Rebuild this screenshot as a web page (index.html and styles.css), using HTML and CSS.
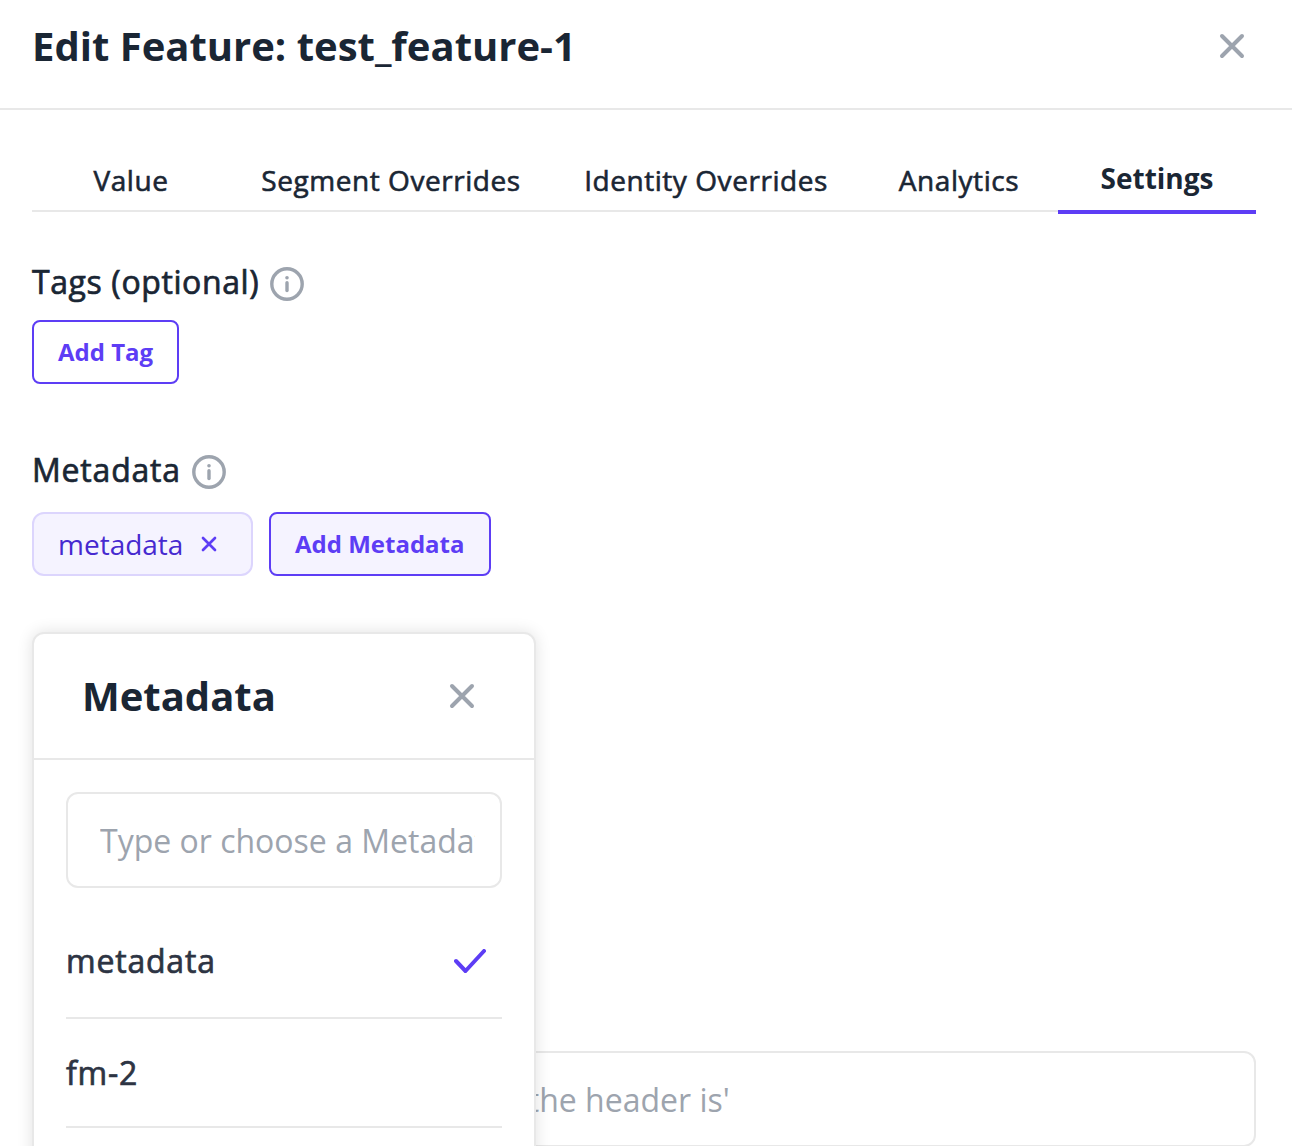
FILE: index.html
```html
<!DOCTYPE html>
<html lang="en">
<head>
<meta charset="utf-8">
<title>Edit Feature</title>
<link rel="stylesheet" href="styles.css">
</head>
<body>
<div class="modal">
  <header class="modal-header">
    <h1 class="modal-title">Edit Feature: test_feature-1</h1>
    <button class="icon-button" aria-label="Close">
      <svg class="close-icon" viewBox="0 0 28 28"><path d="M4 4l20 20M24 4l-20 20"/></svg>
    </button>
  </header>
  <main class="modal-body">
    <nav class="tabs">
      <a class="tab">Value</a>
      <a class="tab tab-segments">Segment Overrides</a>
      <a class="tab tab-identities">Identity Overrides</a>
      <a class="tab">Analytics</a>
      <a class="tab tab-active">Settings</a>
    </nav>
    <section class="field tags-field">
      <div class="label"><span>Tags (optional)</span>
        <svg class="info-icon" viewBox="0 0 34 34"><circle class="ring" cx="17" cy="17" r="15.2"/><circle class="dot" cx="17" cy="10.700" r="1.8"/><path class="stem" d="M17 15.7v7.9"/></svg>
      </div>
      <div class="row"><button class="button">Add Tag</button></div>
    </section>
    <section class="field metadata-field">
      <div class="label label-metadata"><span>Metadata</span>
        <svg class="info-icon" viewBox="0 0 34 34"><circle class="ring" cx="17" cy="17" r="15.2"/><circle class="dot" cx="17" cy="10.700" r="1.8"/><path class="stem" d="M17 15.7v7.9"/></svg>
      </div>
      <div class="row">
        <span class="chip">metadata
          <svg class="chip-close" viewBox="0 0 16 16"><path d="M2 2l12 12M14 2L2 14"/></svg>
        </span>
        <button class="button button-pressed">Add Metadata</button>
      </div>
      <div class="popover">
        <div class="popover-header">
          <h2 class="popover-title">Metadata</h2>
          <button class="icon-button" aria-label="Close">
            <svg class="close-icon" viewBox="0 0 28 28"><path d="M4 4l20 20M24 4l-20 20"/></svg>
          </button>
        </div>
        <div class="popover-body">
          <div class="search"><span class="search-text">Type or choose a Metadata</span></div>
          <div class="option option-selected"><span>metadata</span>
            <svg class="check" viewBox="0 0 32 24"><path d="M2 12l9.500 10L30 2"/></svg>
          </div>
          <div class="option"><span>fm-2</span></div>
        </div>
      </div>
    </section>
    <div class="description"><span>e.g. 'This determines what size the header is'</span></div>
  </main>
</div>
</body>
</html>
```
FILE: styles.css
```css
* { box-sizing: border-box; }
body {
  margin: 0;
  overflow: hidden;
  background: #fff;
  color: #1a2634;
  font-family: "Open Sans", "Noto Sans", sans-serif;
}
h1, h2 { margin: 0; font-size: 40px; line-height: 56px; font-weight: 700; }
button { font-family: inherit; }
.modal { height: 1146px; overflow: hidden; }
.modal-header {
  display: flex;
  align-items: flex-start;
  justify-content: space-between;
  height: 110px;
  padding: 18px 46px 0 32px;
  border-bottom: 2px solid #e8e8e8;
}
.icon-button {
  display: flex;
  align-items: center;
  height: 56px;
  padding: 0;
  border: 0;
  background: none;
}
.close-icon { width: 28px; height: 28px; fill: none; stroke: #9da4ae; stroke-width: 4; stroke-linecap: round; }
.modal-body { padding: 40px 36px 0 32px; }
.tabs { display: flex; height: 62px; border-bottom: 2px solid #e8e8e8; }
.tab {
  display: flex;
  align-items: center;
  justify-content: center;
  width: 198px;
  height: 62px;
  padding-bottom: 2px;
  font-size: 28px;
  line-height: 40px;
  font-weight: 500;
  letter-spacing: 0.55px;
  -webkit-text-stroke: 0.6px currentColor;
  white-space: nowrap;
}
.tab-segments { width: 322px; }
.tab-identities { width: 308px; }
.tab-active {
  height: 64px;
  padding-bottom: 4px;
  font-weight: 700;
  letter-spacing: 0;
  -webkit-text-stroke: 0;
  border-bottom: 4px solid #5d3df5;
}
.label {
  display: flex;
  align-items: center;
  gap: 11px;
  font-size: 32px;
  line-height: 40px;
  font-weight: 500;
  letter-spacing: 0.6px;
  -webkit-text-stroke: 0.7px currentColor;
}
.label-metadata { letter-spacing: 0.8px; }
.info-icon { width: 34px; height: 34px; margin-top: 4px; -webkit-text-stroke: 0; }
.ring { fill: none; stroke: #9da4ae; stroke-width: 3.4; }
.dot { fill: #9da4ae; }
.stem { stroke: #9da4ae; stroke-width: 3.4; stroke-linecap: round; }
.tags-field { margin-top: 50px; }
.row { display: flex; gap: 16px; }
.tags-field .row { margin-top: 18px; }
.metadata-field { position: relative; margin-top: 66px; }
.metadata-field .row { margin-top: 22px; }
.button {
  height: 64px;
  padding: 0 24px 2px;
  border: 2px solid #5d3df5;
  border-radius: 8px;
  background: #fff;
  color: #5d3df5;
  font-size: 24px;
  font-weight: 700;
}
.button-pressed { background: #f5f3ff; }
.chip {
  display: flex;
  align-items: center;
  gap: 18px;
  width: 221px;
  height: 64px;
  padding: 0 0 0 24px;
  border: 2px solid #dcd5fd;
  border-radius: 12px;
  background: #f5f3ff;
  color: #4629d0;
  font-size: 28px;
}
.chip-close { width: 16px; height: 16px; margin-top: -1px; fill: none; stroke: #5d3df5; stroke-width: 2.7; stroke-linecap: round; }
.popover {
  position: absolute;
  z-index: 1;
  top: 182px;
  left: 0;
  width: 504px;
  height: 620px;
  border: 2px solid #e8e8e8;
  border-radius: 12px;
  background: #fff;
  box-shadow: 0 0 16px rgba(0, 0, 0, 0.12);
}
.popover-header {
  display: flex;
  align-items: center;
  justify-content: space-between;
  height: 126px;
  padding: 0 58px 0 48px;
  border-bottom: 2px solid #e8e8e8;
}
.popover-body { padding: 32px; }
.search {
  height: 96px;
  margin-bottom: 17px;
  padding: 1px 25px 0 32px;
  border: 2px solid #e8e8e8;
  border-radius: 12px;
  color: #9da4ae;
  font-size: 32px;
  line-height: 92px;
}
.search-text { display: block; overflow: hidden; white-space: nowrap; }
.option {
  display: flex;
  align-items: center;
  justify-content: space-between;
  height: 109px;
  padding-right: 16px;
  border-bottom: 2px solid #e8e8e8;
  color: #2d3443;
  font-size: 32px;
  font-weight: 500;
  letter-spacing: 0.8px;
  -webkit-text-stroke: 0.7px currentColor;
}
.option-selected { height: 114px; padding-bottom: 2px; }
.check { width: 32px; height: 24px; margin-top: 2px; fill: none; stroke: #5d3df5; stroke-width: 4; stroke-linecap: round; stroke-linejoin: round; }
.description {
  height: 96px;
  margin-top: 475px;
  padding: 1px 32px 0;
  border: 2px solid #e8e8e8;
  border-radius: 12px;
  color: #9da4ae;
  font-size: 32px;
  line-height: 92px;
}
```
